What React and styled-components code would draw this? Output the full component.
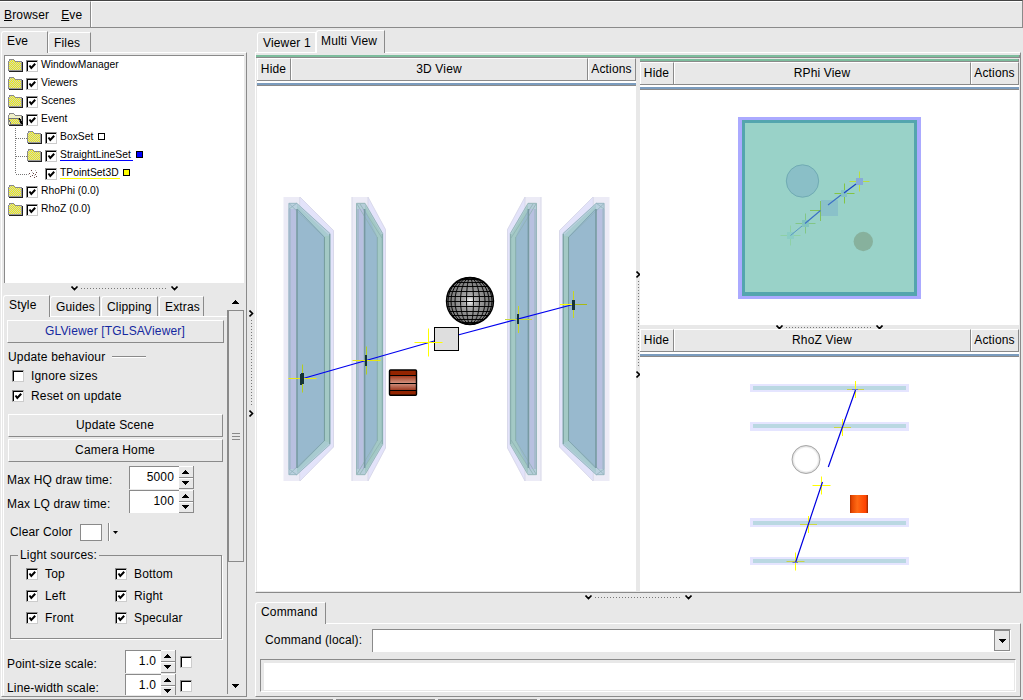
import React from "react";
import styled, { createGlobalStyle, css } from "styled-components";

const bg = "#e8e8e8";
const dark = "#8a8a8a";

const Global = createGlobalStyle`
  * { box-sizing: border-box; }
  body {
    margin: 0;
    background: ${bg};
    font-family: "Liberation Sans", Arial, sans-serif;
    font-size: 12px;
    line-height: 14px;
    letter-spacing: 0.16px;
    color: #000;
    overflow: hidden;
  }
  svg { display: block; flex: none; }
`;

const raised = css`
  border: 1px solid;
  border-color: #fff ${dark} ${dark} #fff;
`;

const Window = styled.div`
  width: 1023px;
  height: 700px;
  display: flex;
  flex-direction: column;
  background: ${bg};
  white-space: nowrap;
`;
const MenuBar = styled.div`
  height: 28px;
  flex: none;
  display: flex;
  border-top: 1px solid #444;
  border-bottom: 1px solid ${dark};
  border-right: 1px solid ${dark};
`;
const MenuItems = styled.div`
  width: 91px;
  display: flex;
  align-items: center;
  gap: 12px;
  padding: 1px 0 0 4px;
  border-top: 1px solid #fff;
  border-right: 1px solid ${dark};
`;
const MenuRest = styled.div`
  flex: 1;
  border-top: 1px solid #fff;
  border-left: 1px solid #fff;
`;
const MenuItem = styled.span`
  &::first-letter { text-decoration: underline; }
  display: inline-block;
`;
const Main = styled.div`
  height: 671px;
  display: flex;
`;
const StatusBar = styled.div`
  height: 1px;
  display: flex;
  gap: 3px;
`;
const StatusCell = styled.div`
  background: ${dark};
  ${(p) => (p.$w ? `width: ${p.$w}px;` : "flex: 1;")}
`;

const Column = styled.div`
  width: ${(p) => p.$w}px;
  height: ${(p) => p.$h || 671}px;
  flex: none;
  display: flex;
  flex-direction: column;
`;
const TabRow = styled.div`
  display: flex;
  flex: none;
  align-items: flex-end;
  height: ${(p) => p.$h}px;
  padding-left: ${(p) => p.$pad || 0}px;
`;
const Tab = styled.div`
  width: ${(p) => p.$w}px;
  height: ${(p) => p.$h}px;
  padding: ${(p) => p.$top}px 0 0 ${(p) => p.$left || 4}px;
  margin-right: ${(p) => p.$gap || 0}px;
  margin-bottom: ${(p) => (p.$active ? -1 : 0)}px;
  position: relative;
  background: ${bg};
  border-top: 1px solid #fff;
  border-left: 1px solid #fff;
  border-right: 1px solid ${(p) => (p.$light ? "#fff" : dark)};
  border-top-left-radius: 3px;
`;
const Panel = styled.div`
  ${raised}
  display: flex;
  flex-direction: column;
  height: ${(p) => p.$h}px;
  flex: none;
  margin-left: ${(p) => p.$ml || 0}px;
  width: ${(p) => p.$w}px;
`;

/* Tree */
const TreeBox = styled.div`
  margin: 2px 0 0 2px;
  width: 240px;
  height: 228px;
  flex: none;
  background: #fff;
  border-left: 1px solid ${dark};
  border-top: 1px solid ${dark};
  padding: 0 0 0 3px;
  font-size: 10.3px;
  letter-spacing: 0.03px;
`;
const TreeRow = styled.div`
  display: flex;
  height: 18px;
  padding-top: 3px;
`;
const Branch = styled.svg.attrs({ width: 19, height: 18 })`
  margin-top: -3px;
`;
const TreeCheck = styled.span`
  margin: 1px 3px 0 3px;
`;
const TreeLabel = styled.span`
  height: 13px;
  margin-top: -1px;
  border-bottom: 1px solid ${(p) => p.$line || "transparent"};
  ${(p) => p.$w && `width: ${p.$w}px;`}
`;
const ColorMark = styled.span`
  width: 7px;
  height: 7px;
  margin: 2px 0 0 3px;
  border: 1px solid #000;
  background: ${(p) => p.$c};
`;

/* Splitters */
const HSplit = styled.div`
  height: ${(p) => p.$h}px;
  flex: none;
  display: flex;
  padding-left: ${(p) => p.$pl}px;
  padding-top: ${(p) => p.$pt}px;
  background: ${bg};
`;
const VSplit = styled.div`
  width: ${(p) => p.$w}px;
  flex: none;
  padding-top: ${(p) => p.$pt}px;
  padding-left: ${(p) => p.$pl || 0}px;
  background: ${bg};
`;

/* Controls */
const Body = styled.div`
  display: flex;
  flex: 1;
  min-height: 0;
`;
const StylePane = styled.div`
  width: 224px;
  height: 379px;
  margin-left: 1px;
  overflow: hidden;
  border-left: 1px solid #fff;
  border-top: 1px solid #fff;
  display: flex;
  flex-direction: column;
  align-items: flex-start;
  padding: 3px 0 0 3px;
`;
const Button = styled.div`
  ${raised}
  width: ${(p) => p.$w}px;
  height: ${(p) => p.$h}px;
  margin: ${(p) => p.$m};
  flex: none;
  display: flex;
  align-items: center;
  justify-content: center;
  padding: 0 1px 2px 0;
  color: ${(p) => p.$c || "#000"};
`;
const Row = styled.div`
  display: flex;
  flex: none;
  align-items: ${(p) => p.$align || "center"};
  height: ${(p) => p.$h}px;
  margin-left: ${(p) => p.$ml || 0}px;
  margin-top: ${(p) => p.$mt || 0}px;
  gap: ${(p) => p.$gap || 0}px;
`;
const Etch = styled.div`
  width: 34px;
  height: 2px;
  margin-left: 7px;
  background: ${dark};
  border-bottom: 1px solid #fff;
`;
const CheckBox = styled.span`
  display: block;
  width: 12px;
  height: 12px;
  flex: none;
  background: #fff;
  border: 1px solid;
  border-color: ${dark} #ccc #ccc ${dark};
  box-shadow: inset 1px 1px 0 #000;
`;
const FieldLabel = styled.span`
  width: ${(p) => p.$w}px;
  padding-top: ${(p) => p.$pt || 0}px;
  padding-bottom: ${(p) => p.$pb || 0}px;
`;
const NumberBox = styled.div`
  width: ${(p) => p.$w}px;
  height: 23px;
  background: #fff;
  border-left: 1px solid ${dark};
  border-top: 1px solid ${dark};
  text-align: right;
  padding: 3px ${(p) => p.$pr || 5}px 0 0;
`;
const Spinner = styled.div`
  width: 15px;
  height: 23px;
  display: flex;
  flex-direction: column;
  border-right: 1px solid ${dark};
`;
const SpinButton = styled.div`
  flex: 1;
  display: flex;
  align-items: center;
  padding-left: 3px;
  border-top: 1px solid #fff;
  border-bottom: 1px solid ${dark};
`;
const Swatch = styled.div`
  width: 22px;
  height: 17px;
  background: #fff;
  border: 1px solid ${dark};
  margin-left: 8px;
`;
const Bar = styled.div`
  width: 2px;
  height: 18px;
  margin: 0 3px 0 6px;
  background: ${dark};
  border-right: 1px solid #fff;
`;
const Group = styled.fieldset`
  width: 212px;
  height: 91px;
  flex: none;
  margin: 7px 0 0 3px;
  padding: 1px 0 0 15px;
  border: 1px solid ${dark};
  box-shadow: 1px 1px 0 #fff;
  display: grid;
  grid-template-columns: 89px 90px;
  grid-auto-rows: 22px;
  align-items: center;
  align-content: start;
`;
const Legend = styled.legend`
  margin-left: -8px;
  padding: 0 2px;
`;
const ScrollBar = styled.div`
  width: 17px;
  height: 396px;
  margin-top: -17px;
  display: flex;
  flex-direction: column;
  align-items: center;
`;
const ScrollTrack = styled.div`
  width: 17px;
  height: 384px;
  border-left: 1px solid ${dark};
  display: flex;
  flex-direction: column;
  justify-content: space-between;
  padding-bottom: 6px;
`;
const ScrollThumb = styled.div`
  ${raised}
  height: 252px;
  width: 16px;
  border-color: ${dark};
  display: flex;
  flex-direction: column;
  align-items: center;
  justify-content: center;
  gap: 2px;
`;
const ScrollArrow = styled.div`
  padding-left: 4px;
`;
const Grip = styled.i`
  width: 8px;
  height: 1px;
  background: ${dark};
`;

/* Viewer windows */
const GreenBar = styled.div`
  height: ${(p) => p.$h || 3}px;
  flex: none;
  background: #7dbd9d;
  border-bottom: 1px solid ${dark};
  border-right: 1px solid ${dark};
`;
const BlueBar = styled.div`
  height: 5px;
  flex: none;
  background: #7b9cbe;
  border-top: 2px solid #fff;
  border-bottom: 1px solid ${dark};
`;
const Header = styled.div`
  height: ${(p) => p.$h || 24}px;
  flex: none;
  display: grid;
  grid-template-columns: 34px 1fr 48px;
  border-bottom: 1px solid ${dark};
`;
const HeaderCell = styled.div`
  display: flex;
  align-items: center;
  justify-content: center;
  padding: 0 1px 1px 0;
  border-top: 1px solid #fff;
  border-left: 1px solid #fff;
  border-right: 1px solid ${dark};
`;
const ViewColumn = styled.div`
  width: ${(p) => p.$w}px;
  display: flex;
  flex-direction: column;
`;
const Canvas = styled.svg`
  background: #fff;
`;

/* Command area */
const Combo = styled.div`
  width: 639px;
  height: 23px;
  display: flex;
  justify-content: flex-end;
  background: #fff;
  border-left: 1px solid ${dark};
  border-top: 1px solid ${dark};
  border-right: 1px solid #fff;
`;
const DropButton = styled.div`
  width: 16px;
  height: 21px;
  background: ${bg};
  border: 1px solid ${dark};
  display: flex;
  align-items: center;
  justify-content: center;
`;
const Output = styled.div`
  width: 756px;
  height: 33px;
  margin: 7px 0 0 4px;
  border: 1px solid;
  border-color: ${dark} #fff #fff ${dark};
  padding: 3px 1px 1px 3px;
`;
const OutputText = styled.div`
  height: 27px;
  background: #fff;
`;

const Tri = ({ up }) => (
  <svg width="7" height="4" shapeRendering="crispEdges">
    <path d={up ? "M3 0h1v1h1v1h1v1h1v1H0V3h1V2h1V1h1z" : "M0 0h7v1H6v1H5v1H4v1H3V3H2V2H1V1H0z"} />
  </svg>
);

const Check = ({ on }) => (
  <CheckBox>
    {on && (
      <svg width="10" height="10">
        <path d="M2.5 4.5L4.3 7L8.2 2.8" fill="none" stroke="#000" strokeWidth="2" />
      </svg>
    )}
  </CheckBox>
);

const SplitMark = ({ vertical }) =>
  vertical ? (
    <svg width="5" height="107">
      <path d="M0.5 0.5L3.5 3.5L0.5 6.5M0.5 100.5L3.5 103.5L0.5 106.5" fill="none" stroke="#000" strokeWidth="1.6" />
      <path d="M2.5 10V97" stroke="#777" strokeDasharray="1 2" />
    </svg>
  ) : (
    <svg width="107" height="5">
      <path d="M0.5 0.5L3.5 3.5L6.5 0.5M100.5 0.5L103.5 3.5L106.5 0.5" fill="none" stroke="#000" strokeWidth="1.6" />
      <path d="M10 2.5H97" stroke="#777" strokeDasharray="1 2" />
    </svg>
  );

const Folder = ({ open }) => (
  <svg width="15" height="13" shapeRendering="crispEdges">
    <defs>
      <pattern id="weave" width="2" height="2" patternUnits="userSpaceOnUse">
        <rect width="2" height="2" fill="#ccc" />
        <rect width="1" height="1" fill="#f4f400" />
        <rect x="1" y="1" width="1" height="1" fill="#f4f400" />
      </pattern>
      <pattern id="weaveOpen" width="2" height="2" patternUnits="userSpaceOnUse">
        <rect width="2" height="2" fill="#f4f400" />
        <rect width="1" height="1" fill="#ccc" />
        <rect x="1" y="1" width="1" height="1" fill="#ccc" />
      </pattern>
    </defs>
    <path d="M1 3L2 1h4l2 2h5v9H1z" fill={open ? "#f0f0c8" : "url(#weave)"} />
    <path d="M0.5 12V2.5L2 0.5H5.5L7.5 2.5H13.5" fill="none" stroke="#8a8a8a" />
    <path d="M14.5 3V12.5H1" fill="none" stroke="#222" />
    <path d="M13.5 3V11.5H1" fill="none" stroke="#999" />
    {open && (
      <>
        <path d="M0.5 5.5H10.5L13 11.5H3z" fill="url(#weaveOpen)" stroke="#777" />
        <path d="M11.5 5.5L14 11" stroke="#000" strokeWidth="1.5" />
      </>
    )}
  </svg>
);

const PointsIcon = () => (
  <svg width="15" height="13" shapeRendering="crispEdges" fill="#644">
    {[[2, 6], [4, 3], [6, 6], [9, 5], [5, 8], [8, 7], [3, 9], [7, 10], [9, 9]].map(([x, y], i) => (
      <rect key={i} x={x} y={y} width="1" height="1" />
    ))}
    <path d="M5 5h1v1H5zM7 8h1v1H7zM8 3h1v1h-1zM1 7h1v1H1z" fill="#bbb" />
  </svg>
);

const Item = ({ name, open, child, last, points, line, mark, w }) => (
  <TreeRow>
    {child && (
      <Branch>
        <path d={last ? "M7.5 0V10" : "M7.5 0V18"} stroke="#777" strokeDasharray="1 1" />
        <path d="M8 10.5H19" stroke="#777" strokeDasharray="1 1" />
      </Branch>
    )}
    {points ? <PointsIcon /> : <Folder open={open} />}
    <TreeCheck><Check on /></TreeCheck>
    <TreeLabel $line={line} $w={w}>{name}</TreeLabel>
    {mark && <ColorMark $c={mark} />}
  </TreeRow>
);

const NumField = ({ value, w, pr }) => (
  <>
    <NumberBox $w={w} $pr={pr}>{value}</NumberBox>
    <Spinner>
      <SpinButton><Tri up /></SpinButton>
      <SpinButton><Tri /></SpinButton>
    </Spinner>
  </>
);

const LabeledCheck = ({ text, on = true }) => (
  <Row $h={14} $gap={7}><Check on={on} /><span>{text}</span></Row>
);

const ViewHeader = ({ title, h }) => (
  <>
    <Header $h={h}>
      <HeaderCell>Hide</HeaderCell>
      <HeaderCell>{title}</HeaderCell>
      <HeaderCell>Actions</HeaderCell>
    </Header>
    <BlueBar />
  </>
);

const Cross = ({ x, y, r = 9, c = "#ffff00", h }) => (
  <g strokeWidth="1">
    <path d={`M${x} ${y - r}V${y + r}`} stroke={c} />
    <path d={`M${x - r} ${y}H${x + r}`} stroke={h || c} />
  </g>
);

const WidePlate = () => (
  <g strokeWidth="0.8">
    <path d="M283.5 197H300V481H283.5z" fill="#ecebf6" />
    <path d="M300 197L333.7 230.5V447L300 481z" fill="#e3e3fa" />
    <path d="M299.7 197V209M299.7 470V481M300 197L333.5 230.5V447L300 481" stroke="#d4d4e6" fill="none" />
    <path d="M288.7 203H297L330 233.5V444.5L297 475H288.7z" fill="#bad0de" />
    <path d="M297 205L330 236V443L297 473z" fill="#a8cbd0" />
    <path d="M324 236L330 236V443L324 441z" fill="#a3c9c5" />
    <path d="M288.7 209H296V469H288.7z" fill="#b8c0e0" />
    <path d="M297 209L324 236V441L297 468z" fill="#98b9ce" />
    <path d="M288.9 203.3H296.7L330 233.5V444.5L296.7 474.7H288.9zM289 203.5L323 236M289 209L297 203M289 474.5L324 441M289 469L297 475M290 209V469" fill="none" stroke="#92b2bc" />
    <path d="M297.3 209L324.4 237.3V440.7L297.3 468" fill="none" stroke="#7a9fab" />
    <path d="M297 209V468" stroke="#7799a2" strokeWidth="1.6" />
    <path d="M324.5 237V441M329.7 234V444" stroke="#789f9f" strokeWidth="1" />
  </g>
);

const NarrowPlate = () => (
  <g strokeWidth="0.8">
    <path d="M351.7 197H368V481H351.7z" fill="#ecebf6" />
    <path d="M368 197L385.7 229.5V448L368 481z" fill="#e3e3fa" />
    <path d="M352 197V481M368 197V209M368 470V481M368 197L385.5 229.5V448L368 481" stroke="#d4d4e6" fill="none" />
    <path d="M356.3 203H365L382.7 233V444.5L365 475H356.3z" fill="#b5cdd9" />
    <path d="M365 205L382.7 236V443L365 473z" fill="#a3c9c5" />
    <path d="M356.3 209H363.5V469H356.3z" fill="#b8c0e0" />
    <path d="M365 209L377 236V441L365 468z" fill="#98b9ce" />
    <path d="M356.5 203.3H365L382.7 233.5V444.5L365 474.7H356.5zM357 204L377 237M360 204L382 238M357 474L377 441M360 474L382 440M358 209V469" fill="none" stroke="#8fb3b3" />
    <path d="M364.6 209V468" stroke="#7799a2" strokeWidth="1.6" />
    <path d="M377.3 237V441M382.3 234V444" stroke="#7fa6a6" />
  </g>
);

const Scene3D = () => (
  <Canvas width="379" height="505" viewBox="257 86 379 505">
    <defs>
      <radialGradient id="ball"><stop offset="0" stopColor="#fff" /><stop offset="0.25" stopColor="#aaa" /><stop offset="0.65" stopColor="#888" /><stop offset="1" stopColor="#777" /></radialGradient>
      <linearGradient id="copper" x2="0" y2="1">
        <stop offset="0.22" stopColor="#932400" /><stop offset="0.26" stopColor="#a84428" /><stop offset="0.52" stopColor="#d39482" /><stop offset="0.78" stopColor="#a04028" /><stop offset="0.8" stopColor="#932400" />
      </linearGradient>
    </defs>
    <WidePlate />
    <NarrowPlate />
    <g transform="translate(893 0) scale(-1 1)"><WidePlate /><NarrowPlate /></g>
    <path d="M303 378.5L436 340.5M458 335L573 304.5" stroke="#0000ee" strokeWidth="1.2" />
    <Cross x={302.5} y={378.5} r={14} c="#b4cd22" h="#e8e810" />
    <Cross x={366.5} y={360.5} r={14} c="#b4cd22" h="#e6e610" />
    <Cross x={518.5} y={319.5} r={13.5} c="#c6d622" h="#c6d640" />
    <Cross x={573.5} y={304.5} r={13.5} c="#c6d622" h="#a9b912" />
    <path d="M560 304.5H572" stroke="#ff0" />
    <g fill="#163336">
      <path d="M300 374h1v-1h3v11h-2v1h-2z" />
      <rect x="365" y="355" width="2" height="11" />
      <rect x="517" y="314" width="2" height="10" />
      <rect x="572" y="300" width="3" height="10" />
    </g>
    <rect x="434.5" y="327.5" width="24" height="23" fill="#dedede" stroke="#000" />
    <Cross x={428.5} y={342.5} r={14} />
    <g fill="none" stroke="#000" strokeWidth="0.95">
      <circle cx="470" cy="301" r="23.5" fill="url(#ball)" strokeWidth="1.4" />
      {[3.5, 9.5, 15, 19, 22].map((r) => <ellipse key={r} cx="470" cy="301" rx={r} ry="23.5" />)}
      {[-21.5, -18.5, -14.5, -9.5, -4.5, 0.5, 5.5, 10.5, 14.5, 18.5, 21.5].map((y) => {
        const w = Math.sqrt(552 - y * y);
        return <path key={y} d={`M${470 - w} ${301 + y}H${470 + w}`} />;
      })}
    </g>
    <rect x="389.5" y="370" width="27" height="25.3" rx="1" fill="url(#copper)" stroke="#000" strokeWidth="1.4" />
    <path d="M390 375.5H416M390 383.5H416M390 390.5H416" stroke="#000" />
  </Canvas>
);

const SceneRPhi = () => (
  <Canvas width="379" height="235" viewBox="640 90 379 235">
    <rect x="738" y="117" width="183" height="182" fill="#abaaff" />
    <rect x="742" y="120" width="175" height="176" fill="#54a5ae" />
    <rect x="745" y="123" width="169" height="169" fill="#99d2c8" />
    <circle cx="802.5" cy="181" r="16.2" fill="#8abfc7" stroke="#70abb3" />
    <circle cx="863.3" cy="241.5" r="9.7" fill="#87b19d" />
    <Cross x={790.5} y={235.5} r={10} c="#8ed0a5" />
    <Cross x={805.5} y={223.5} r={10} c="#82c686" />
    <path d="M820.5 201V221M810 210.5H821" stroke="#82c15f" />
    <Cross x={844.5} y={193.5} r={10} c="#83c444" />
    <Cross x={859.5} y={181.5} r={10} c="#badd3d" />
    <rect x="821" y="200" width="17" height="16" fill="#8ac1c9" />
    <rect x="787" y="232" width="7" height="7" fill="#8bcdc4" />
    <rect x="802" y="220" width="7" height="7" fill="#82c5be" />
    <rect x="841" y="190" width="6" height="7" fill="#84c2c4" />
    <rect x="856" y="178" width="7" height="7" fill="#88abd8" />
    <path d="M790.5 235.5L802 226" stroke="#5997c4" />
    <path d="M805 223.5L820.5 210.5M828 205L841 195" stroke="#3c70c6" strokeWidth="1.1" />
    <path d="M844 193L856 184" stroke="#1740c4" strokeWidth="1.1" />
  </Canvas>
);

const RhoBar = ({ y, h, iy }) => (
  <>
    <rect x="750" y={y} width="159" height={h} fill="#e5e5ff" />
    <rect x="753" y={iy} width="153" height="4" fill="#bad8e2" />
  </>
);

const SceneRhoZ = () => (
  <Canvas width="379" height="234" viewBox="640 357 379 234">
    <defs>
      <linearGradient id="orange"><stop offset="0" stopColor="#a83000" /><stop offset="0.1" stopColor="#e64600" /><stop offset="0.4" stopColor="#ff6a14" /><stop offset="0.88" stopColor="#ff4200" /><stop offset="1" stopColor="#902800" /></linearGradient>
      <radialGradient id="pearl"><stop offset="0.8" stopColor="#fff" /><stop offset="1" stopColor="#d4d4d4" /></radialGradient>
    </defs>
    <RhoBar y={384} h={8} iy={386} />
    <RhoBar y={422} h={9} iy={424} />
    <RhoBar y={518} h={9} iy={521} />
    <RhoBar y={557} h={8} iy={559} />
    <circle cx="806" cy="459.5" r="14" fill="url(#pearl)" stroke="#999" strokeWidth="0.8" />
    <rect x="850" y="495" width="18" height="18" fill="url(#orange)" />
    <Cross x={855.5} y={389.5} r={8.5} h="#c9d247" />
    <Cross x={842.5} y={427.5} r={8.5} h="#ccd840" />
    <Cross x={821.5} y={485.5} r={9} />
    <Cross x={808.5} y={524.5} r={8.5} h="#ccd840" />
    <Cross x={795.5} y={561.5} r={9} h="#c9d247" />
    <path d="M855.5 390L828.3 467M822.5 482L795.7 562" stroke="#0000e0" strokeWidth="1.2" />
    <path d="M852 389.5H858M792.5 562.5H798" stroke="#6a7ac8" />
  </Canvas>
);

const LeftSide = () => (
  <Column $w={248}>
    <TabRow $h={24} $pad={1}>
      <Tab $active $w={47} $h={22} $top={2} $left={5}>Eve</Tab>
      <Tab $w={43} $h={20} $top={3} $left={5}>Files</Tab>
    </TabRow>
    <Panel $h={645} $w={246} $ml={1}>
      <TreeBox>
        <Item name="WindowManager" />
        <Item name="Viewers" />
        <Item name="Scenes" />
        <Item name="Event" open />
        <Item name="BoxSet" child mark="#fff" w={35} />
        <Item name="StraightLineSet" child line="#0000ff" mark="#0000ff" w={73} />
        <Item name="TPointSet3D" child last points line="#ffff00" mark="#ffff00" w={60} />
        <Item name="RhoPhi (0.0)" />
        <Item name="RhoZ (0.0)" />
      </TreeBox>
      <HSplit $h={11} $pl={69} $pt={3}><SplitMark /></HSplit>
      <TabRow $h={22} $pad={1}>
        <Tab $active $w={47} $h={22} $top={2} $left={5}>Style</Tab>
        <Tab $w={50} $h={20} $top={3} $left={5} $gap={1}>Guides</Tab>
        <Tab $w={57} $h={20} $top={3} $left={5} $gap={1}>Clipping</Tab>
        <Tab $w={45} $h={20} $top={3} $left={5}>Extras</Tab>
      </TabRow>
      <Body>
        <StylePane>
          <Button $w={217} $h={23} $m="0" $c="#1428a0">GLViewer [TGLSAViewer]</Button>
          <Row $h={14} $ml={1} $mt={7}>Update behaviour<Etch /></Row>
          <Row $h={14} $ml={5} $mt={5}><LabeledCheck text="Ignore sizes" on={false} /></Row>
          <Row $h={14} $ml={5} $mt={6}><LabeledCheck text="Reset on update" /></Row>
          <Button $w={215} $h={23} $m="11px 0 0 1px">Update Scene</Button>
          <Button $w={215} $h={23} $m="2px 0 0 1px">Camera Home</Button>
          <Row $h={23} $mt={4}><FieldLabel $w={122} $pt={4}>Max HQ draw time:</FieldLabel><NumField value="5000" w={50} /></Row>
          <Row $h={23} $mt={1}><FieldLabel $w={122} $pt={4}>Max LQ draw time:</FieldLabel><NumField value="100" w={50} /></Row>
          <Row $h={18} $mt={10} $ml={3}>Clear Color<Swatch /><Bar /><svg width="5" height="3"><path d="M0 0H5L2.5 3z" /></svg></Row>
          <Group>
            <Legend>Light sources:</Legend>
            {["Top", "Bottom", "Left", "Right", "Front", "Specular"].map((t) => <LabeledCheck key={t} text={t} />)}
          </Group>
          <Row $h={23} $mt={11}><FieldLabel $w={118} $pt={4}>Point-size scale:</FieldLabel><NumField value="1.0" w={36} /><Row $h={12} $ml={4}><Check /></Row></Row>
          <Row $h={23} $mt={1}><FieldLabel $w={118} $pt={4}>Line-width scale:</FieldLabel><NumField value="1.0" w={36} /><Row $h={12} $ml={4}><Check /></Row></Row>
        </StylePane>
        <ScrollBar>
          <HSplit $h={11} $pl={0} $pt={1}><Tri up /></HSplit>
          <ScrollTrack>
            <ScrollThumb><Grip /><Grip /><Grip /></ScrollThumb>
            <ScrollArrow><Tri /></ScrollArrow>
          </ScrollTrack>
        </ScrollBar>
      </Body>
    </Panel>
  </Column>
);

const RightSide = () => (
  <Column $w={768}>
    <TabRow $h={24} $pad={2}>
      <Tab $light $w={59} $h={20} $top={3} $left={5}>Viewer 1</Tab>
      <Tab $active $w={69} $h={23} $top={3} $left={4}>Multi View</Tab>
    </TabRow>
    <Panel $h={541} $w={766}>
      <Row $h={2} />
      <GreenBar />
      <Body>
        <Row $h={1} $ml={1} />
        <ViewColumn $w={379}>
          <ViewHeader title="3D View" h={23} />
          <Scene3D />
        </ViewColumn>
        <VSplit $w={4} $pt={213}><SplitMark vertical /></VSplit>
        <ViewColumn $w={379}>
          <Row $h={1} />
          <GreenBar />
          <ViewHeader title="RPhi View" h={23} />
          <SceneRPhi />
          <HSplit $h={4} $pl={136} $pt={0}><SplitMark /></HSplit>
          <ViewHeader title="RhoZ View" h={23} />
          <SceneRhoZ />
        </ViewColumn>
      </Body>
    </Panel>
    <HSplit $h={8} $pl={330} $pt={2}><SplitMark /></HSplit>
    <TabRow $h={22}>
      <Tab $active $w={71} $h={22} $top={2} $left={5}>Command</Tab>
    </TabRow>
    <Panel $h={74} $w={766}>
      <Row $h={23} $mt={5} $ml={9}><FieldLabel $w={107} $pb={2}>Command (local):</FieldLabel><Combo><DropButton><Tri /></DropButton></Combo></Row>
      <Output><OutputText /></Output>
    </Panel>
  </Column>
);

export default function App() {
  return (
    <Window>
      <Global />
      <MenuBar>
        <MenuItems><MenuItem>Browser</MenuItem><MenuItem>Eve</MenuItem></MenuItems>
        <MenuRest />
      </MenuBar>
      <Main>
        <LeftSide />
        <VSplit $w={7} $pt={282} $pl={1}><SplitMark vertical /></VSplit>
        <RightSide />
      </Main>
      <StatusBar>
        <StatusCell $w={333} /><StatusCell $w={99} /><StatusCell $w={99} /><StatusCell />
      </StatusBar>
    </Window>
  );
}
